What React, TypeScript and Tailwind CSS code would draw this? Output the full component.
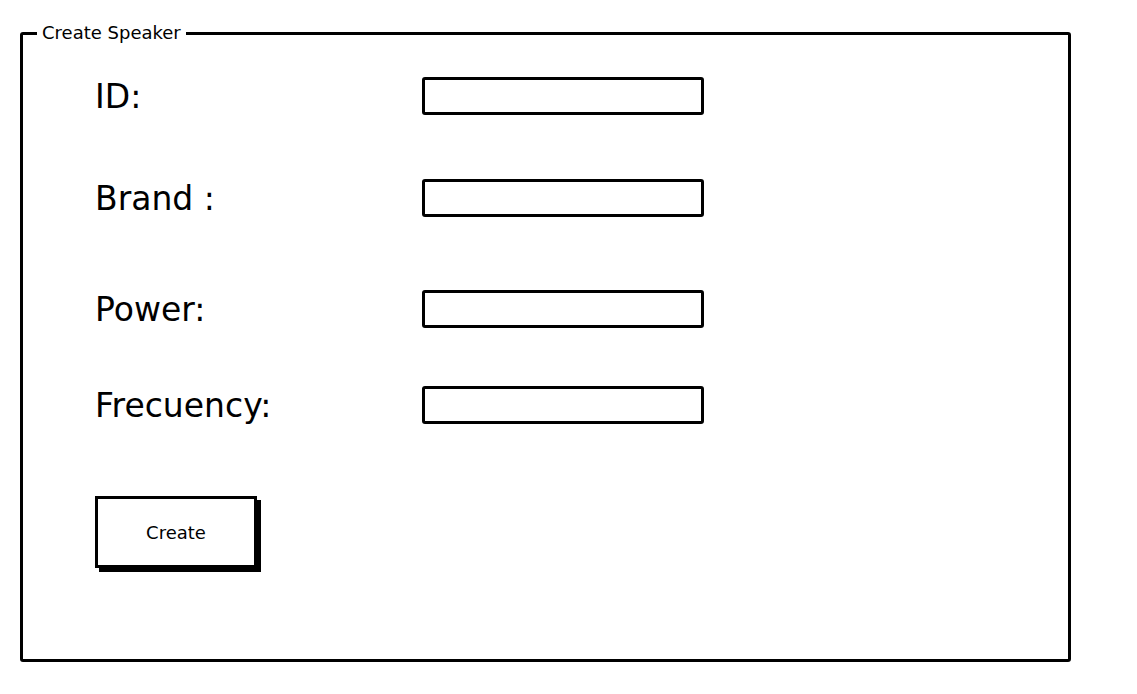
const fields = [
  { label: "ID:", mt: "mt-[33px]" },
  { label: "Brand :", mt: "mt-[64px]" },
  { label: "Power:", mt: "mt-[73px]" },
  { label: "Frecuency:", mt: "mt-[58px]" },
];

export default function App() {
  return (
    <div className="min-h-[694px] w-[1137px] bg-white pt-[22px] pl-[20px] font-['DejaVu_Sans',sans-serif] text-black">
      <fieldset className="w-[1051px] h-[640px] border-[3px] border-black rounded-[3px] pl-[72px]">
        <legend className="ml-[-58px] px-[5px] text-[18px] leading-[22px]">Create Speaker</legend>

        {fields.map((f) => (
          <div key={f.label} className={`flex items-center ${f.mt}`}>
            <label className="w-[327px] text-[33px] leading-none">{f.label}</label>
            <input
              type="text"
              className="w-[282px] h-[38px] border-[3px] border-black rounded-[3px] bg-white outline-none"
            />
          </div>
        ))}

        <button className="mt-[72px] w-[162px] h-[72px] border-[3px] border-black bg-white shadow-[4px_4px_0_#000] text-[18px]">
          Create
        </button>
      </fieldset>
    </div>
  );
}
